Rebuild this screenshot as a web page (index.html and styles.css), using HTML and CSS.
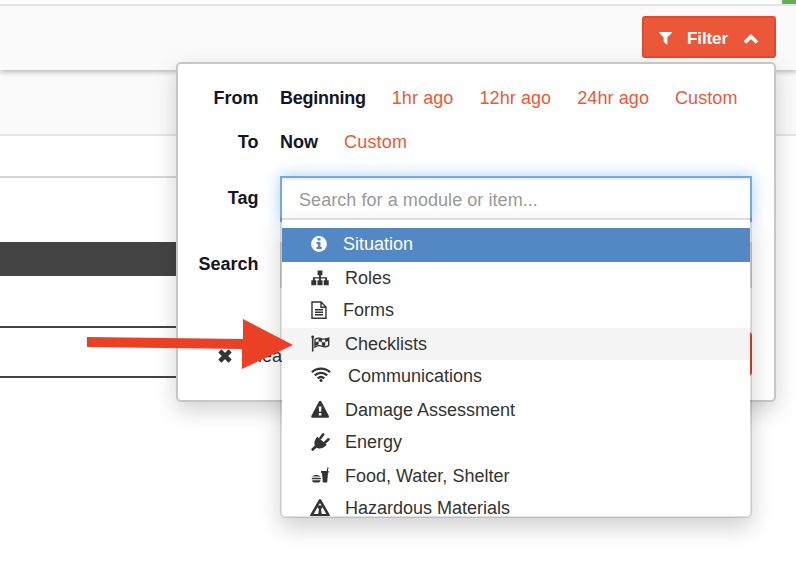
FILE: index.html
```
<!DOCTYPE html>
<html lang="en">
<head>
<meta charset="utf-8">
<title>Filter</title>
<link rel="stylesheet" href="styles.css">
</head>
<body>
<div class="page">
  <div class="topline"><span class="status"></span></div>
  <header class="toolbar">
    <button class="filter-btn">
      <svg class="funnel" viewBox="0 0 14 14"><path d="M.7 0h12.6c.6 0 .8.6.4 1L9 5.8v7c0 .6-.6.8-1 .5L5.3 10.900c-.2-.2-.3-.4-.3-.6V5.800L.3 1C-.1.600.1 0 .7 0z"/></svg>
      <span>Filter</span>
      <svg class="chevron" viewBox="0 0 16 12"><path d="M2 9.500 8 3.500l6 6"/></svg>
    </button>
  </header>
  <div class="subbar"></div>
  <div class="strip"></div>
  <div class="table-head"></div>
  <div class="table-row first"></div>
  <div class="table-row"></div>

  <section class="panel">
    <div class="row from"><span class="label">From</span><b>Beginning</b><a>1hr ago</a><a>12hr ago</a><a>24hr ago</a><a>Custom</a></div>
    <div class="row to"><span class="label">To</span><b>Now</b><a>Custom</a></div>
    <div class="row tag"><span class="label">Tag</span><div class="input focused">Search for a module or item...</div></div>
    <div class="row search"><span class="label">Search</span><div class="input"></div></div>
    <div class="actions">
      <svg class="times" viewBox="0 0 14 14"><path d="M2.500 2.500l9 9M11.500 2.500l-9 9"/></svg>
      <span class="clear">Clear</span><span class="apply"></span>
    </div>
  </section>

  <ul class="menu">
    <li class="active"><svg viewBox="0 0 20 20"><circle cx="9" cy="10" r="7.900"/><path class="cut-blue" d="M7.500 4h3v2.600h-3zM6.500 8h4v5h1.300v2h-5.300v-2h1.300v-3H6.500z"/></svg><span>Situation</span></li>
    <li><svg viewBox="0 0 20 20"><path d="M7.600 2.500h4.800v4.700h-1.500v2h6.200v3h1.600v5h-5v-5h1.500v-1.700h-4.300v1.700h1.600v5h-5v-5H9v-1.700H4.800v1.700h1.500v5h-5v-5h1.600v-3h6.200v-2H7.600z"/></svg><span>Roles</span></li>
    <li><svg viewBox="0 0 20 20"><path class="line" d="M2 2h9l5 5v11.300H2zM11 2v5.300h5M5 9.700h8M5 12.200h8M5 14.800h8"/></svg><span>Forms</span></li>
    <li class="hover"><svg viewBox="0 0 20 20"><path class="line thick" d="M2.700 2.500V17.500"/><circle cx="2.700" cy="3" r="1.400"/><path class="line" d="M5 5.300c3-1.700 4.600-1.500 6.900-.5 2.400.9 4 .4 6.800-.7v7.600c-2.700 1.500-4.400 1.600-6.800.5-2.200-1-4-1-6.900.8z"/><path d="M8.600 4l3.300.8v3.100l-3.300-.6zM5 8.700l3.600-1.400v3.200L5 11.800zM11.900 7.900c1.300.4 2.200.3 3.300 0v3.800c-1.100.4-2.200.2-3.300-.2zM15.200 4.900l3.400-1.100v3.100l-3.400 1z"/></svg><span>Checklists</span></li>
    <li><svg class="wifi" viewBox="0 0 22 20"><path d="M1.900 7.200c5.200-4.800 13-4.800 18.200 0M4.800 10.300c3.600-3.200 8.800-3.200 12.400 0M7.700 13.300c2-1.600 4.600-1.600 6.600 0"/><circle cx="11" cy="15.500" r="1.500"/></svg><span>Communications</span></li>
    <li><svg viewBox="0 0 20 20"><path d="M9.100 1.300c.5-.9 1.600-.9 2.100 0l7.700 14.700c.4.900-.1 1.700-1.100 1.700H2.400c-1 0-1.500-.8-1.100-1.700z"/><path class="cut" d="M8.700 6.500h2.800l-.4 5.300H9.100zM8.800 13h2.600v2.500H8.800z"/></svg><span>Damage Assessment</span></li>
    <li><svg viewBox="0 0 20 20"><path class="line plug" d="M2.700 17.500l4-4M10.500 6l2.600-3.600M15 10.600l3.500-3.300"/><path d="M7.400 4.800l9.300 8c-1.800 2.300-4.500 3.700-7.200 3.700-1.300 0-2.500-.4-3.500-1.300-2.800-2.500-1.700-7.300 1.400-10.400z"/></svg><span>Energy</span></li>
    <li><svg viewBox="0 0 20 20"><path d="M2.200 10.600c1-2.100 7.300-2.100 8.300 0zM1.800 11.700h9v1.500h-9zM2.200 14.300h8.300c0 1.500-.7 2.100-2 2.100H4.200c-1.300 0-2-.6-2-2.100zM11 5h5.700l.8-3.800h1l-.6 3.800h.8v1.700H18l-.8 9.700h-4.400l-.8-9.700h-1z"/></svg><span>Food, Water, Shelter</span></li>
    <li><svg class="haz" viewBox="0 0 22 20"><path class="line hazard" d="M11 2.300l8.500 14.900h-17z"/><path d="M8.400 7.500h5.200v1.600l-1.500 2.100.7 5.800H9.200l.7-5.800-1.500-2.100z"/></svg><span>Hazardous Materials</span></li>
  </ul>

  <svg class="arrow" viewBox="0 0 210 52"><path d="M1 18l156 2V0l50 26-51 24V30L1 28z"/></svg>
</div>
</body>
</html>
```
FILE: styles.css
```
* { box-sizing: border-box; }
body { margin: 0; background: #fff; color: #333; font: 18px/32px "Liberation Sans", Arial, sans-serif; }
.page { position: relative; width: 796px; height: 584px; overflow: hidden; }
.topline { position: relative; z-index: 1; background: #fff; height: 6px; border-bottom: 2px solid #e4e4e4; display: flex; justify-content: flex-end; }
.status { width: 14px; height: 4px; background: #67ac5b; }
.toolbar { position: relative; height: 64px; background: #fafafa; box-shadow: 0 1px 6px rgba(0,0,0,.35); display: flex; justify-content: flex-end; align-items: flex-start; padding: 10px 20px 0 0; }
.filter-btn { width: 134px; height: 42px; padding: 3px 16px 0; border: 2px solid #e5492d; border-radius: 3px; background: #ea5839; color: #fff; font: bold 17px/36px "Liberation Sans", Arial, sans-serif; letter-spacing: -.1px; display: flex; align-items: center; }
.funnel { width: 13px; height: 13px; fill: #fff; margin-right: 14px; margin-left: -1px; }
.chevron { width: 16px; height: 12px; margin-left: auto; margin-right: -1px; fill: none; stroke: #fff; stroke-width: 3.6; }
.filter-btn span { margin-left: 1px; }
.subbar { height: 66px; background: #fafafa; border-bottom: 2px solid #e4e4e4; }
.strip { width: 200px; height: 42px; border-bottom: 2px solid #d5d5d5; }
.table-head { width: 200px; height: 34px; margin-top: 64px; background: #444; }
.table-row { width: 200px; height: 50px; border-bottom: 2px solid #444; }
.table-row.first { height: 52px; }

.panel { position: absolute; left: 176px; top: 62px; width: 600px; height: 340px; padding: 18px 24px 0 0; background: #fff; border: 2px solid #c6c6c6; border-radius: 5px; box-shadow: 0 8px 22px rgba(0,0,0,.18); }
.row { display: flex; height: 32px; color: #151525; white-space: nowrap; }
.label { width: 80.5px; margin-right: 21.5px; text-align: right; font-weight: bold; flex: none; }
.row a { color: #ea5839; margin-left: 26px; }
.from b { letter-spacing: -.25px; }
.from a { letter-spacing: .09px; }
.to { margin-top: 12px; }
.to a { letter-spacing: .2px; }
.tag { height: 44px; margin-top: 18px; margin-bottom: 22px; }
.tag .label { line-height: 44px; }
.search { height: 44px; }
.search .label { line-height: 44px; }
.input { flex: 1; height: 46px; border: 2px solid #ddd; box-shadow: inset 0 2px 2px rgba(0,0,0,.07); margin-right: -2px; }
.focused { border-color: #73a9e5; box-shadow: inset 0 2px 2px rgba(0,0,0,.07), 0 0 16px rgba(102,165,233,.55); color: #999; padding-left: 17px; line-height: 44px; letter-spacing: .06px; }
.actions { display: flex; align-items: center; height: 44px; margin-top: 46px; padding-left: 39px; }
.times { width: 16px; height: 16px; margin-top: 4px; fill: none; stroke: #333; stroke-width: 3.8; }
.clear { margin: 4px 0 0 12px; }
.apply { width: 90px; height: 44px; margin-left: auto; margin-right: -2px; background: #e74b2a; border-radius: 4px; }

.menu { position: absolute; left: 280px; top: 218px; width: 472px; height: 300px; margin: 0; padding: 8px 0 0; list-style: none; overflow: hidden; background: #fff; background-clip: padding-box; border: 2px solid rgba(0,0,0,.12); border-radius: 0 0 5px 5px; box-shadow: 0 10px 22px rgba(0,0,0,.18); }
.menu li { display: flex; height: 32px; padding-left: 28px; white-space: nowrap; }
.menu li:nth-child(odd) { height: 34px; }
.menu .active { background: #5488c5; color: #fff; }
.menu .hover { background: #f4f4f4; }
.menu svg { width: 20px; height: 20px; margin-top: 6px; margin-right: 15px; fill: currentColor; flex: none; }
.menu .active svg, .menu li:nth-child(3) svg { margin-right: 13px; }
.menu .wifi { width: 22px; margin-right: 16px; margin-top: 5px; }
.menu .haz { width: 22px; margin-left: -1px; margin-right: 14px; }
.wifi path { fill: none; stroke: #333; stroke-width: 2.3; }
.menu .line { fill: none; stroke: #333; stroke-width: 1.4; }
.menu .thick { stroke-width: 1.6; }
.menu .plug { stroke-width: 2.6; stroke-linecap: round; }
.menu .hazard { stroke-width: 2.6; stroke-linejoin: round; }
.menu .cut { fill: #fff; }
.menu .active circle { fill: #fff; }
.menu .active .cut-blue { fill: #5488c5; }
.arrow { position: absolute; left: 86px; top: 319px; width: 210px; height: 52px; fill: #ea4025; }
```
